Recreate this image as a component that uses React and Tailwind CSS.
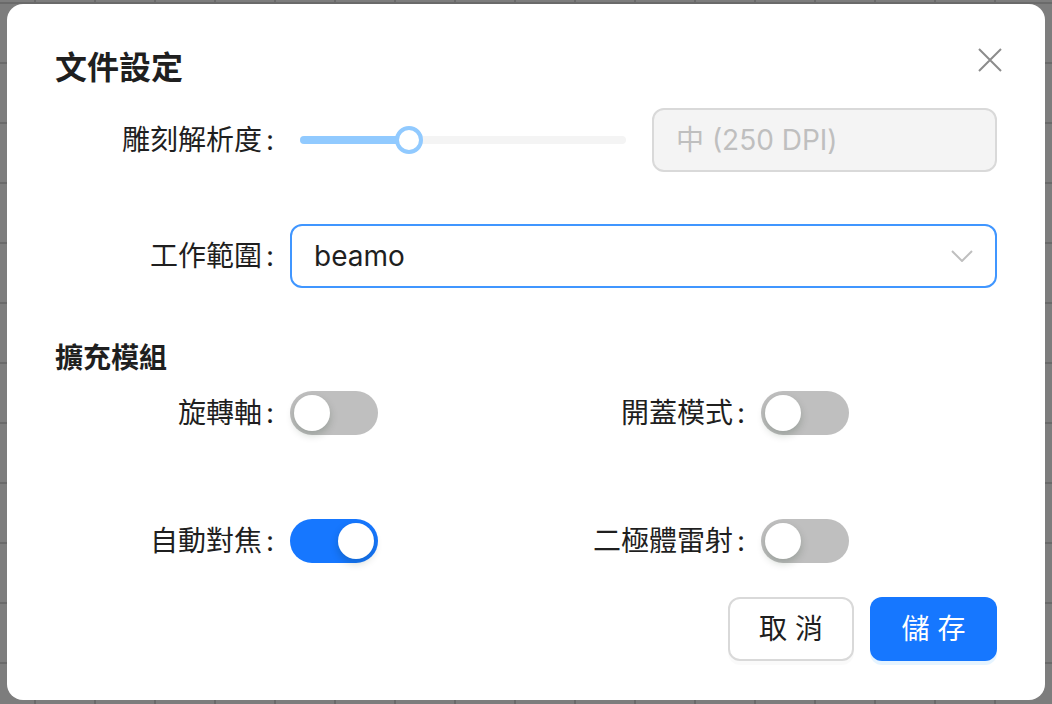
import { useState } from "react";

function Switch({ checked, onChange }) {
  return (
    <button
      onClick={() => onChange(!checked)}
      className={`relative w-[88px] h-[44px] rounded-full shrink-0 ${
        checked ? "bg-[#1677ff]" : "bg-[#bfbfbf]"
      }`}
    >
      <span
        className={`absolute top-[4px] w-[36px] h-[36px] rounded-full bg-white shadow-[0_4px_8px_rgba(0,35,11,0.2)] ${
          checked ? "left-[48px]" : "left-[4px]"
        }`}
      />
    </button>
  );
}

function Label({ children, className = "" }) {
  return (
    <div className={`w-[235px] shrink-0 pr-4 text-right text-[28px] leading-[44px] text-[#1f1f1f] ${className}`}>
      {children}
      <span className="ml-[4px]">:</span>
    </div>
  );
}

function ToggleItem({ label, checked, onChange }) {
  return (
    <div className="flex items-center h-16">
      <Label>{label}</Label>
      <Switch checked={checked} onChange={onChange} />
    </div>
  );
}

export default function App() {
  const [mods, setMods] = useState({
    rotary: false,
    openBottom: false,
    autofocus: true,
    diode: false,
  });
  const toggle = (k) => (v) => setMods((m) => ({ ...m, [k]: v }));

  return (
    <div className="w-[1052px] h-[704px] flex items-center justify-center bg-[#7d7d7d] bg-[linear-gradient(to_right,#6a6a6a_2px,transparent_2px),linear-gradient(to_bottom,#6a6a6a_2px,transparent_2px)] bg-[length:60px_60px] bg-[position:34px_2px] font-[Inter,'Noto_Sans_CJK_TC',sans-serif]">
      <div className="relative w-[1038px] h-[696px] rounded-2xl bg-white px-12 pt-10 pb-10 flex flex-col">
        {/* Close */}
        <button className="absolute top-[44px] right-[43px] w-6 h-6">
          <svg viewBox="0 0 24 24" className="w-6 h-6" fill="none" stroke="#8c8c8c" strokeWidth="2">
            <path d="M1 1L23 23M23 1L1 23" />
          </svg>
        </button>

        {/* Title */}
        <h1 className="text-[32px] leading-[48px] font-bold text-[#1f1f1f]">文件設定</h1>

        {/* Resolution */}
        <div className="flex items-center h-16 mt-4">
          <Label>雕刻解析度</Label>
          <div className="relative ml-[10px] w-[326px] h-2 rounded-full bg-[#f4f4f4]">
            <div className="w-[108px] h-2 rounded-full bg-[#91caff]" />
            <div className="absolute left-[95px] top-[-10px] w-[28px] h-[28px] rounded-full bg-white border-4 border-[#91caff]" />
          </div>
          <div className="ml-[26px] w-[345px] h-16 rounded-xl border-2 border-[#d9d9d9] bg-[#f4f4f4] px-[22px] flex items-center text-[28px] text-[#bfbfbf]">
            中 (250 DPI)
          </div>
        </div>

        {/* Workarea */}
        <div className="flex items-center h-16 mt-[52px]">
          <Label>工作範圍</Label>
          <div className="w-[707px] h-16 rounded-xl border-2 border-[#4096ff] pl-[22px] pr-[22px] flex items-center justify-between text-[28px] text-[#1f1f1f]">
            <span>beamo</span>
            <svg viewBox="0 0 22 12" className="w-[22px] h-[12px]" fill="none" stroke="#bfbfbf" strokeWidth="2">
              <path d="M1 1L11 11L21 1" />
            </svg>
          </div>
        </div>

        {/* Modules */}
        <h2 className="mt-[49px] text-[28px] leading-[42px] font-bold text-[#1f1f1f]">擴充模組</h2>
        <div className="grid grid-cols-2 gap-y-16 mt-[2px]">
          <ToggleItem label="旋轉軸" checked={mods.rotary} onChange={toggle("rotary")} />
          <ToggleItem label="開蓋模式" checked={mods.openBottom} onChange={toggle("openBottom")} />
          <ToggleItem label="自動對焦" checked={mods.autofocus} onChange={toggle("autofocus")} />
          <ToggleItem label="二極體雷射" checked={mods.diode} onChange={toggle("diode")} />
        </div>

        {/* Footer */}
        <div className="flex justify-end gap-4 mt-6">
          <button className="w-[126px] h-16 rounded-xl border-2 border-[#d9d9d9] bg-white text-[28px] text-[#1f1f1f] shadow-[0_4px_0_rgba(0,0,0,0.02)]">
            取 消
          </button>
          <button className="w-[127px] h-16 rounded-xl bg-[#1677ff] text-[28px] text-white shadow-[0_4px_0_rgba(5,145,255,0.1)]">
            儲 存
          </button>
        </div>
      </div>
    </div>
  );
}
